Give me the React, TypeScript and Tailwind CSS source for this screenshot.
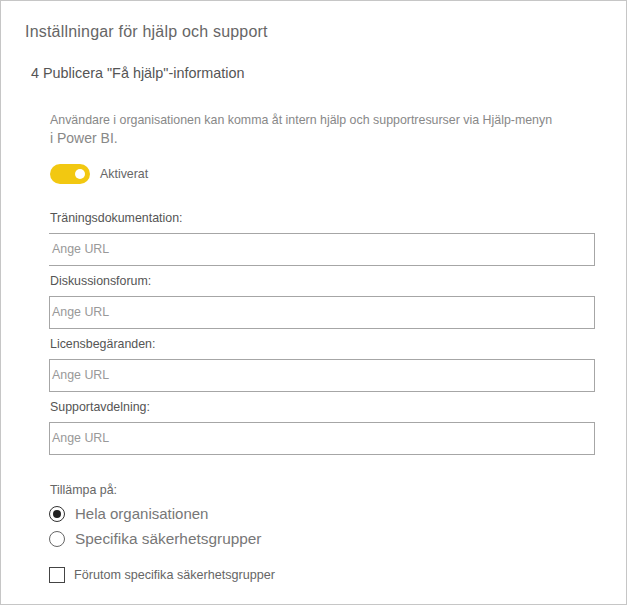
export default function App() {
  const fields = [
    { label: "Träningsdokumentation:", noLeft: true },
    { label: "Diskussionsforum:", noLeft: false },
    { label: "Licensbegäranden:", noLeft: false },
    { label: "Supportavdelning:", noLeft: false },
  ];

  return (
    <div
      className="h-[606px] w-[627px] bg-white"
      style={{ fontFamily: '"Liberation Sans", Arial, sans-serif' }}
    >
      <div className="h-[605px] w-[627px] border border-[#c6c6c6] bg-white">
        <h1 className="ml-[24px] mt-[21px] text-[16px] leading-[20px] tracking-[0.2px] text-[#666]">
          Inställningar för hjälp och support
        </h1>
        <h2 className="ml-[30px] mt-[22px] text-[14.4px] leading-[18px] text-[#555]">
          4 Publicera "Få hjälp"-information
        </h2>

        <div className="ml-[49px] mr-[31px] mt-[30px]">
          <p className="text-[12.4px] leading-[16px] text-[#888]">
            Användare i organisationen kan komma åt intern hjälp och supportresurser via Hjälp-menyn
          </p>
          <p className="text-[14px] leading-[20px] text-[#888]">i Power BI.</p>

          <div className="mt-[16px] flex items-center gap-[10px]">
            <div className="flex h-[20px] w-[40px] items-center justify-end rounded-full bg-[#f2c811] pr-[5px]">
              <div className="h-[10px] w-[10px] rounded-full bg-white" />
            </div>
            <span className="text-[12.4px] text-[#666]">Aktiverat</span>
          </div>

          <div className="mt-[27px] flex flex-col">
            {fields.map((f) => (
              <div key={f.label} className="flex flex-col">
                <label className="mb-[8px] text-[12.4px] leading-[14px] text-[#555]">{f.label}</label>
                <div
                  className={
                    f.noLeft
                      ? "mb-[8px] -ml-px flex h-[33px] items-center border border-l-0 border-[#a6a6a6] pl-[3px] text-[12.4px] text-[#999]"
                      : "mb-[8px] -ml-px flex h-[33px] items-center border border-[#a6a6a6] pl-[2px] text-[12.4px] text-[#999]"
                  }
                >
                  Ange URL
                </div>
              </div>
            ))}
          </div>

          <p className="mt-[20px] text-[12.4px] leading-[14px] text-[#666]">Tillämpa på:</p>
          <div className="mt-[8px] flex flex-col gap-[8px]">
            <div className="flex items-center gap-[10px]">
              <div className="-ml-px flex h-[16px] w-[16px] items-center justify-center rounded-full border border-[#333]">
                <div className="h-[8px] w-[8px] rounded-full bg-[#222]" />
              </div>
              <span className="text-[15px] leading-[17px] text-[#777]">Hela organisationen</span>
            </div>
            <div className="flex items-center gap-[10px]">
              <div className="-ml-px h-[16px] w-[16px] rounded-full border border-[#666]" />
              <span className="text-[15.4px] leading-[17px] text-[#777]">Specifika säkerhetsgrupper</span>
            </div>
          </div>
          <div className="mt-[20px] flex items-center gap-[9px]">
            <div className="-ml-px h-[16px] w-[16px] border border-[#444]" />
            <span className="text-[12.6px] leading-[16px] text-[#666]">Förutom specifika säkerhetsgrupper</span>
          </div>
        </div>
      </div>
    </div>
  );
}
